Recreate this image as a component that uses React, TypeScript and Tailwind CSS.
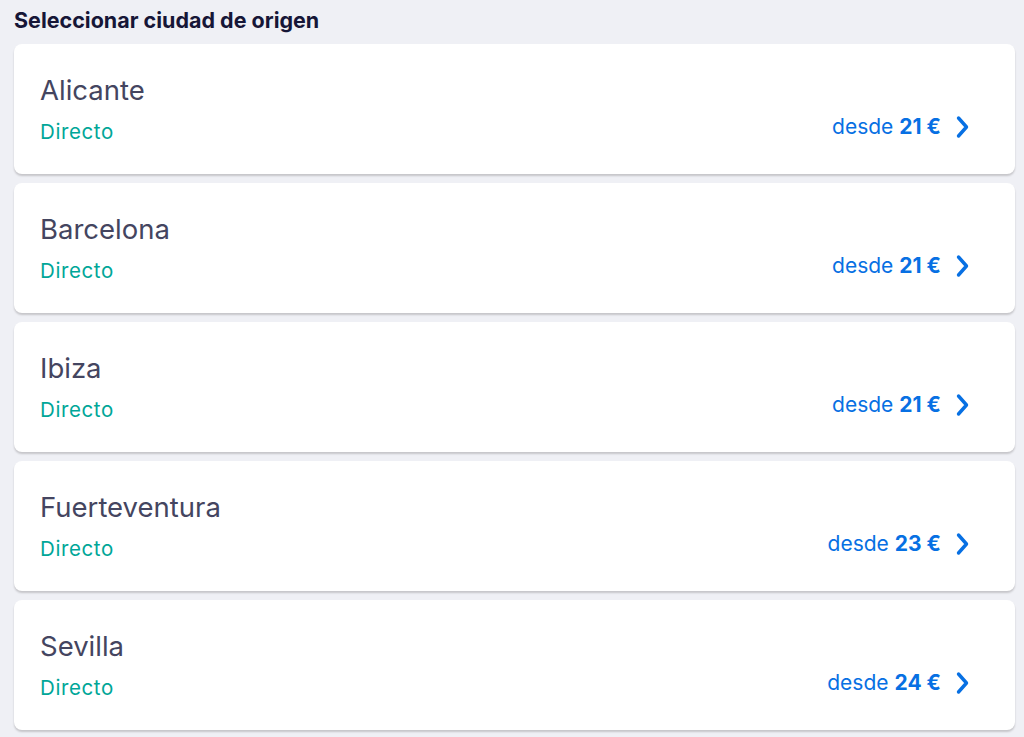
const cities = [
  { name: "Alicante", price: 21 },
  { name: "Barcelona", price: 21 },
  { name: "Ibiza", price: 21 },
  { name: "Fuerteventura", price: 23 },
  { name: "Sevilla", price: 24 },
];

function Chevron() {
  return (
    <svg width="15" height="24" viewBox="0 0 15 24" fill="none" className="ml-[14px]">
      <path d="M3.5 3 L11.5 12 L3.5 21" stroke="currentColor" strokeWidth="3.4" strokeLinecap="round" strokeLinejoin="round" />
    </svg>
  );
}

export default function App() {
  return (
    <div
      className="min-h-[737px] bg-[#eff0f5] px-[14px] pt-[7px]"
      style={{ fontFamily: "Inter, 'Noto Sans', sans-serif" }}
    >
      <h1 className="text-[21.5px] leading-[26px] font-bold text-[#161637]">
        Seleccionar ciudad de origen
      </h1>
      <div className="mt-[11px] flex w-[1001px] flex-col gap-[9px]">
        {cities.map((c) => (
          <div
            key={c.name}
            className="flex h-[130px] items-start justify-between rounded-[8px] bg-white pl-[26px] pr-[45px] pt-[30px] shadow-[0_2px_2px_rgba(37,32,31,0.2)]"
          >
            <div className="flex flex-col">
              <span className="text-[27.5px] leading-[32px] text-[#444560]">{c.name}</span>
              <span className="mt-[13px] text-[20.5px] leading-[26px] tracking-[0.6px] text-[#00a698]">
                Directo
              </span>
            </div>
            <div className="mt-[40px] flex items-center text-[21px] leading-[26px] text-[#0770e3]">
              <span>desde</span>
              <span className="ml-[6px] font-bold">{c.price} €</span>
              <Chevron />
            </div>
          </div>
        ))}
      </div>
    </div>
  );
}
